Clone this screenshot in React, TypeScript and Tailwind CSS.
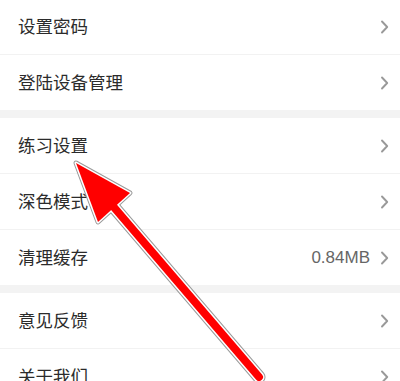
import React from "react";

type Row = { label: string; value?: string };

const groups: Row[][] = [
  [{ label: "设置密码" }, { label: "登陆设备管理" }],
  [{ label: "练习设置" }, { label: "深色模式" }, { label: "清理缓存", value: "0.84MB" }],
  [{ label: "意见反馈" }, { label: "关于我们" }],
];

function Chevron() {
  return (
    <svg width="9" height="14" viewBox="0 0 9 14" className="shrink-0">
      <path d="M2 1.5 L7.2 7 L2 12.5" fill="none" stroke="#999999" strokeWidth="1.9" strokeLinecap="round" strokeLinejoin="round" />
    </svg>
  );
}

function Arrow() {
  return (
    <svg width="400" height="381" viewBox="0 0 400 381" className="absolute left-0 top-0 pointer-events-none">
      <g strokeLinecap="round" strokeLinejoin="round">
        <line x1="112" y1="205" x2="259" y2="377" stroke="#9a9a9a" strokeWidth="13" />
        <polygon points="76,163 98,222 130,193" fill="#9a9a9a" stroke="#9a9a9a" strokeWidth="5" />
        <line x1="112" y1="205" x2="259" y2="377" stroke="#ffffff" strokeWidth="11" />
        <polygon points="76,163 98,222 130,193" fill="#ffffff" stroke="#ffffff" strokeWidth="3" />
        <line x1="112" y1="205" x2="259" y2="377" stroke="#ff0000" strokeWidth="8" />
        <polygon points="76,163 98,222 130,193" fill="#ff0000" />
      </g>
    </svg>
  );
}

export default function App() {
  return (
    <div
      className="relative w-[400px] h-[381px] overflow-hidden bg-white"
      style={{ fontFamily: '"Noto Sans CJK SC", "Noto Sans", sans-serif' }}
    >
      <div className="-mt-px">
        {groups.map((group, gi) => (
          <div key={gi}>
            {gi > 0 && <div className="h-[8px] bg-[#f3f3f3]" />}
            {group.map((row, ri) => (
              <div key={row.label}>
                {ri > 0 && <div className="h-px bg-[#f2f2f2]" />}
                <div className="flex items-center h-[55px] pl-[18px] pr-[11px]">
                  <span className="flex-1 text-[17.5px] text-[#2b2b2b]">{row.label}</span>
                  {row.value && (
                    <span className="mr-[10px] text-[17px] text-[#666666]" style={{ fontFamily: '"Liberation Sans", sans-serif' }}>
                      {row.value}
                    </span>
                  )}
                  <Chevron />
                </div>
              </div>
            ))}
          </div>
        ))}
      </div>
      <Arrow />
    </div>
  );
}
